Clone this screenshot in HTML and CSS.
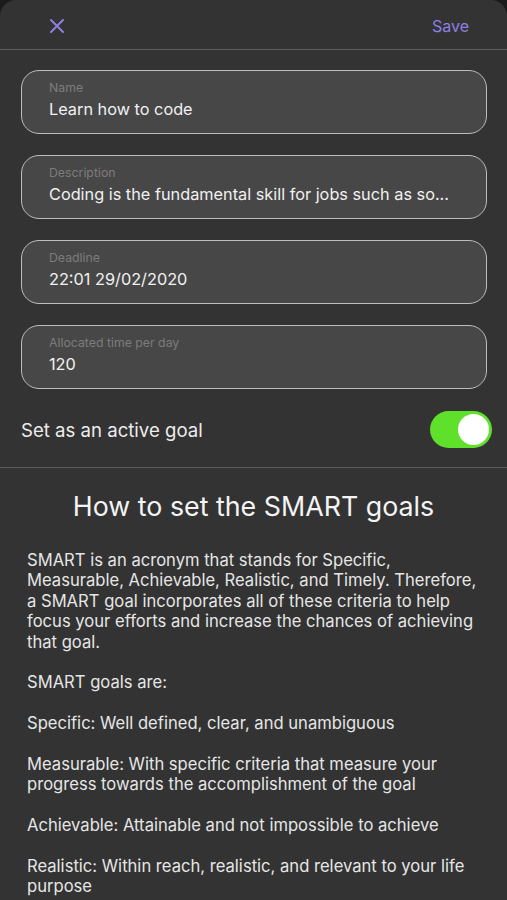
FILE: index.html
```html
<!DOCTYPE html>
<html lang="en">

<head>
    <meta charset="UTF-8">
    <meta name="viewport" content="width=device-width, initial-scale=1.0">
    <title>Edit goal</title>
    <link rel="stylesheet" href="styles.css">
</head>

<body>
    <div class="sheet">
        <div class="topbar">
            <button class="close-btn" aria-label="Close">
                <svg width="16" height="16" viewBox="0 0 16 16">
                    <path d="M2 2 L14 14 M14 2 L2 14" stroke="#8f7fe0" stroke-width="2" stroke-linecap="round" />
                </svg>
            </button>
            <button class="save-btn">Save</button>
        </div>

        <form class="goal-form">
            <div class="field">
                <span class="field-label">Name</span>
                <span class="field-value">Learn how to code</span>
            </div>
            <div class="field">
                <span class="field-label">Description</span>
                <span class="field-value">Coding is the fundamental skill for jobs such as so...</span>
            </div>
            <div class="field">
                <span class="field-label">Deadline</span>
                <span class="field-value">22:01 29/02/2020</span>
            </div>
            <div class="field">
                <span class="field-label">Allocated time per day</span>
                <span class="field-value">120</span>
            </div>

            <div class="toggle-row">
                <span>Set as an active goal</span>
                <div class="switch on"><div class="knob"></div></div>
            </div>
        </form>

        <div class="guide">
            <h2>How to set the SMART goals</h2>
            <p>SMART is an acronym that stands for Specific, Measurable, Achievable, Realistic, and Timely. Therefore, a SMART goal incorporates all of these criteria to help focus your efforts and increase the chances of achieving that goal.</p>
            <p>SMART goals are:</p>
            <p>Specific: Well defined, clear, and unambiguous</p>
            <p>Measurable: With specific criteria that measure your progress towards the accomplishment of the goal</p>
            <p>Achievable: Attainable and not impossible to achieve</p>
            <p>Realistic: Within reach, realistic, and relevant to your life purpose</p>
        </div>
    </div>
</body>

</html>
```

FILE: styles.css
```css
body {
    margin: 0;
    background-color: #1b1b1b;
    font-family: Inter, "Liberation Sans", sans-serif;
    color: #ececec;
}

.sheet {
    background-color: #333333;
    border-radius: 16px 16px 0 0;
    height: 900px;
    overflow: hidden;
}

.topbar {
    height: 49px;
    display: flex;
    align-items: center;
    justify-content: space-between;
    padding: 0 38px 0 49px;
    border-bottom: 1.5px solid #5c5c5c;
}

.topbar button {
    background: none;
    border: none;
    padding: 0;
    cursor: pointer;
}

.close-btn {
    display: flex;
    margin-top: 2px;
}

.save-btn {
    color: #8f7fe0;
    font-family: Inter, "Liberation Sans", sans-serif;
    font-size: 16px;
    margin-top: 2px;
}

.goal-form {
    padding: 20px 20px 0 21px;
    display: flex;
    flex-direction: column;
    gap: 21px;
    border-bottom: 1.5px solid #5c5c5c;
}

.field {
    height: 64px;
    box-sizing: border-box;
    border: 1.5px solid #bdbdbd;
    border-radius: 18px;
    background-color: #474747;
    padding: 9px 27px 0 27px;
    display: flex;
    flex-direction: column;
}

.field-label {
    font-size: 12.3px;
    color: #7c7c7c;
    line-height: 16px;
}

.field-value {
    font-size: 16.3px;
    line-height: 26px;
    color: #f1f1f1;
    white-space: nowrap;
}

.toggle-row {
    display: flex;
    align-items: center;
    justify-content: space-between;
    font-size: 18.6px;
    height: 37px;
    margin: 1px -5px 19px 0;
}

.switch {
    width: 62px;
    height: 37px;
    border-radius: 19px;
    background-color: #5fe02b;
    position: relative;
}

.knob {
    position: absolute;
    top: 3px;
    right: 3px;
    width: 31px;
    height: 31px;
    border-radius: 50%;
    background-color: #ffffff;
}

.guide {
    padding: 22px 27px 0 27px;
}

.guide h2 {
    text-align: center;
    font-weight: 400;
    font-size: 26.8px;
    margin: 0 0 28px 0;
    color: #f4f4f4;
}

.guide p {
    font-size: 16.6px;
    line-height: 20.4px;
    margin: 0 0 20.4px 0;
    color: #e6e6e6;
}
```
